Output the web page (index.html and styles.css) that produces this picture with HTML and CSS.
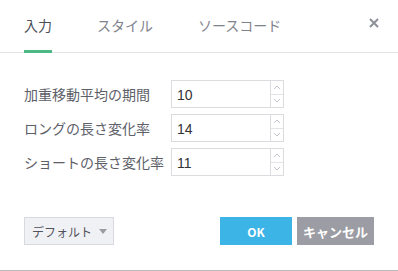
FILE: index.html
```html
<!DOCTYPE html>
<html lang="ja">
<head>
    <meta charset="UTF-8">
    <meta name="viewport" content="width=device-width, initial-scale=1.0">
    <title>加重移動平均</title>
    <link rel="stylesheet" href="styles.css">
</head>
<body>
    <div class="dialog">
        <div class="tabs">
            <div class="tab active">入力</div>
            <div class="tab">スタイル</div>
            <div class="tab">ソースコード</div>
            <button class="close" type="button">
                <svg width="10" height="10" viewBox="0 0 10 10"><path d="M1 1L9 9M9 1L1 9" stroke="#8e9099" stroke-width="2"/></svg>
            </button>
        </div>

        <form class="form">
            <label for="period">加重移動平均の期間</label>
            <div class="number">
                <input type="text" id="period" value="10">
                <div class="spin">
                    <span><svg width="8" height="5" viewBox="0 0 8 5"><path d="M1 4L4 1L7 4" fill="none" stroke="#c3c6cc"/></svg></span>
                    <span><svg width="8" height="5" viewBox="0 0 8 5"><path d="M1 1L4 4L7 1" fill="none" stroke="#c3c6cc"/></svg></span>
                </div>
            </div>

            <label for="long">ロングの長さ変化率</label>
            <div class="number">
                <input type="text" id="long" value="14">
                <div class="spin">
                    <span><svg width="8" height="5" viewBox="0 0 8 5"><path d="M1 4L4 1L7 4" fill="none" stroke="#c3c6cc"/></svg></span>
                    <span><svg width="8" height="5" viewBox="0 0 8 5"><path d="M1 1L4 4L7 1" fill="none" stroke="#c3c6cc"/></svg></span>
                </div>
            </div>

            <label for="short">ショートの長さ変化率</label>
            <div class="number">
                <input type="text" id="short" value="11">
                <div class="spin">
                    <span><svg width="8" height="5" viewBox="0 0 8 5"><path d="M1 4L4 1L7 4" fill="none" stroke="#c3c6cc"/></svg></span>
                    <span><svg width="8" height="5" viewBox="0 0 8 5"><path d="M1 1L4 4L7 1" fill="none" stroke="#c3c6cc"/></svg></span>
                </div>
            </div>
        </form>

        <div class="footer">
            <button class="btn-default" type="button">デフォルト<span class="caret"></span></button>
            <div class="actions">
                <button class="btn-ok" type="button">OK</button>
                <button class="btn-cancel" type="button">キャンセル</button>
            </div>
        </div>
    </div>
</body>
</html>
```

FILE: styles.css
```css
body {
    margin: 0;
    padding: 0;
    background-color: #fff;
    font-family: "Noto Sans CJK JP", "Liberation Sans", sans-serif;
}

.dialog {
    width: 398px;
    height: 271px;
    box-sizing: border-box;
    border-bottom: 1px solid #b9b9b9;
    display: flex;
    flex-direction: column;
}

/* pestañas */
.tabs {
    height: 53px;
    box-sizing: border-box;
    border-bottom: 1px solid #e1e3e7;
    display: flex;
    padding: 0 19px 0 24px;
}

.tab {
    font-size: 14px;
    line-height: 20px;
    padding-top: 15px;
    margin-right: 45px;
    color: #80838c;
}

.tab.active {
    color: #4b4f58;
    border-bottom: 3px solid #4cb985;
    margin-bottom: -1px;
}

.close {
    margin-left: auto;
    align-self: flex-start;
    margin-top: 18px;
    width: 10px;
    height: 10px;
    padding: 0;
    border: none;
    background: none;
    display: flex;
}

/* formulario */
.form {
    display: grid;
    grid-template-columns: 147px 113px;
    grid-auto-rows: 28px;
    row-gap: 6px;
    padding: 27px 24px 0;
    margin: 0;
}

.form label {
    display: flex;
    align-items: center;
    font-size: 14px;
    color: #5d6068;
    white-space: nowrap;
    padding-bottom: 1px;
}

.number {
    display: flex;
    border: 1px solid #dadce0;
    box-sizing: border-box;
}

.number input {
    flex: 1;
    min-width: 0;
    border: none;
    padding: 2px 5px 0;
    font-family: "Liberation Sans", sans-serif;
    font-size: 14px;
    color: #333;
    outline: none;
}

.spin {
    width: 12px;
    border-left: 1px solid #dadce0;
    display: flex;
    flex-direction: column;
}

.spin span {
    flex: 1;
    display: flex;
    align-items: center;
    justify-content: center;
}

.spin span + span {
    border-top: 1px solid #e3e5e8;
}

/* pie */
.footer {
    margin-top: auto;
    padding: 0 24px 25px;
    display: flex;
    justify-content: space-between;
    align-items: center;
}

.footer button {
    height: 28px;
    font-family: "Noto Sans CJK JP", "Liberation Sans", sans-serif;
    cursor: pointer;
}

.btn-default {
    width: 90px;
    border: 1px solid #d7d9de;
    background-color: #f0f1f5;
    color: #50535b;
    font-size: 12px;
    padding: 0 0 0 1px;
    display: flex;
    align-items: center;
    justify-content: center;
    gap: 7px;
}

.caret {
    width: 0;
    height: 0;
    border-left: 4px solid transparent;
    border-right: 4px solid transparent;
    border-top: 5px solid #9a9ca3;
}

.actions {
    display: flex;
    gap: 5px;
}

.btn-ok,
.btn-cancel {
    border: none;
    color: #fff;
    font-weight: bold;
    font-size: 13px;
    padding: 0;
}

.btn-ok {
    width: 72px;
    font-size: 12px;
    background-color: #3cb4e5;
}

.btn-cancel {
    width: 77px;
    background-color: #9c9da4;
}
```
